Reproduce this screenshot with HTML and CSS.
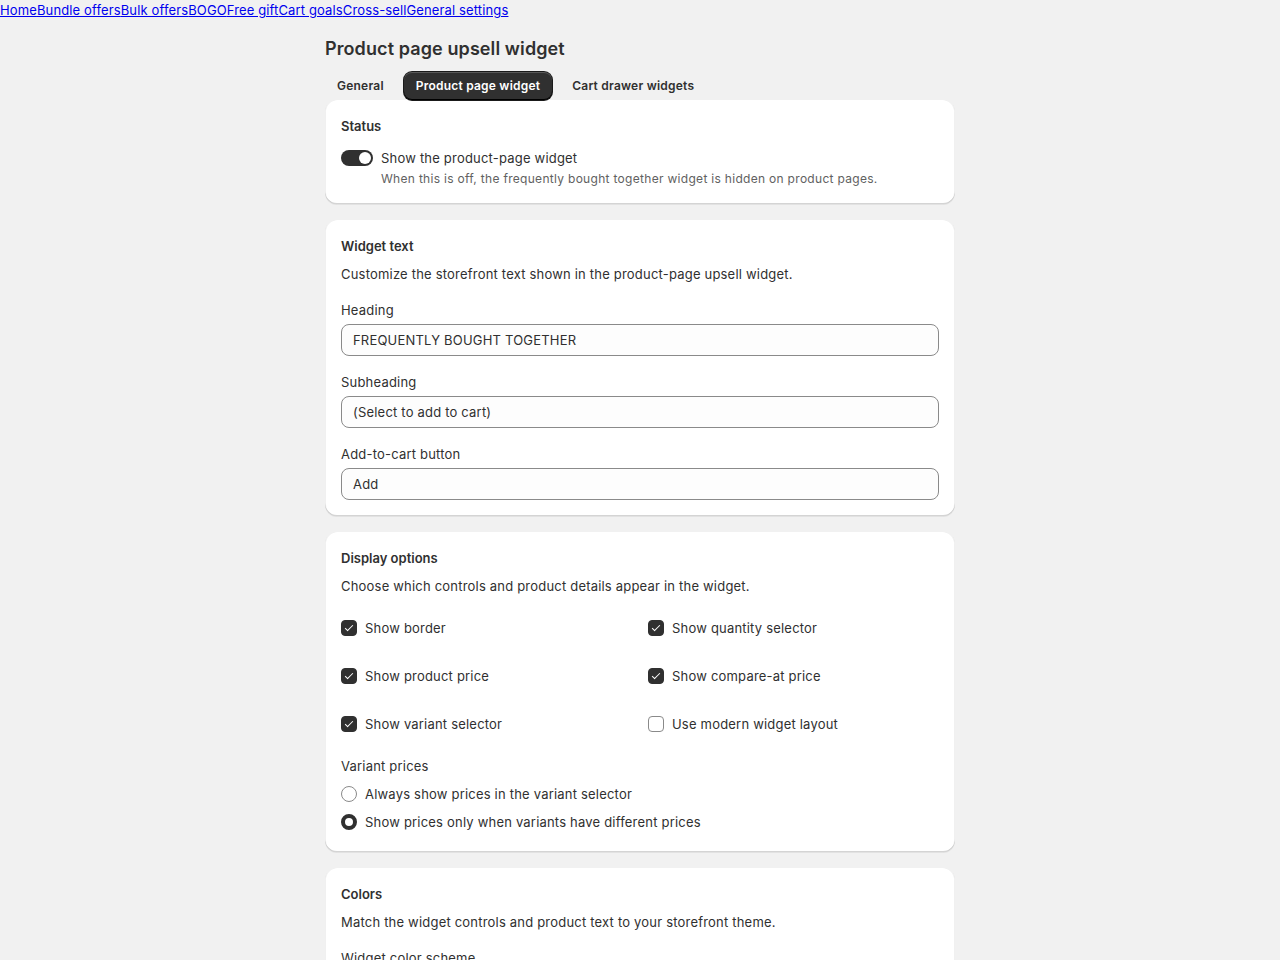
FILE: index.html
```html
<!DOCTYPE html>
<html lang="en">
<head>
    <meta charset="UTF-8">
    <meta name="viewport" content="width=device-width, initial-scale=1.0">
    <title>Product page upsell widget</title>
    <link rel="stylesheet" href="styles.css">
</head>
<body>
    <nav class="top-nav"><a href="#">Home</a><a href="#">Bundle offers</a><a href="#">Bulk offers</a><a href="#">BOGO</a><a href="#">Free gift</a><a href="#">Cart goals</a><a href="#">Cross-sell</a><a href="#">General settings</a></nav>

    <main class="page">
        <h1 class="page-title">Product page upsell widget</h1>

        <div class="tabs">
            <button class="tab">General</button>
            <button class="tab tab-active">Product page widget</button>
            <button class="tab">Cart drawer widgets</button>
        </div>

        <section class="card">
            <h2 class="card-title">Status</h2>
            <label class="toggle-row">
                <span class="toggle toggle-on"><span class="toggle-knob"></span></span>
                <span>Show the product-page widget</span>
            </label>
            <p class="help">When this is off, the frequently bought together widget is hidden on product pages.</p>
        </section>

        <section class="card">
            <h2 class="card-title">Widget text</h2>
            <p class="card-desc">Customize the storefront text shown in the product-page upsell widget.</p>
            <div class="field">
                <label class="field-label">Heading</label>
                <input class="text-input" type="text" value="FREQUENTLY BOUGHT TOGETHER">
            </div>
            <div class="field">
                <label class="field-label">Subheading</label>
                <input class="text-input" type="text" value="(Select to add to cart)">
            </div>
            <div class="field">
                <label class="field-label">Add-to-cart button</label>
                <input class="text-input" type="text" value="Add">
            </div>
        </section>

        <section class="card">
            <h2 class="card-title">Display options</h2>
            <p class="card-desc">Choose which controls and product details appear in the widget.</p>
            <div class="check-grid">
                <label class="check-row"><span class="checkbox checked"></span>Show border</label>
                <label class="check-row"><span class="checkbox checked"></span>Show quantity selector</label>
                <label class="check-row"><span class="checkbox checked"></span>Show product price</label>
                <label class="check-row"><span class="checkbox checked"></span>Show compare-at price</label>
                <label class="check-row"><span class="checkbox checked"></span>Show variant selector</label>
                <label class="check-row"><span class="checkbox"></span>Use modern widget layout</label>
            </div>
            <div class="radio-group">
                <div class="field-label">Variant prices</div>
                <label class="radio-row"><span class="radio"></span>Always show prices in the variant selector</label>
                <label class="radio-row"><span class="radio selected"></span>Show prices only when variants have different prices</label>
            </div>
        </section>

        <section class="card">
            <h2 class="card-title">Colors</h2>
            <p class="card-desc">Match the widget controls and product text to your storefront theme.</p>
            <div class="field">
                <label class="field-label">Widget color scheme</label>
                <input class="text-input" type="text" value="Match theme">
            </div>
        </section>
    </main>
</body>
</html>
```

FILE: styles.css
```css
body {
    margin: 0;
    background: #f1f1f1;
    font-family: Inter, 'Noto Sans', sans-serif;
    font-size: 13px;
    letter-spacing: 0.2px;
    color: #303030;
}
.top-nav {
    height: 20px;
    line-height: 20px;
    letter-spacing: 0.13px;
}
.top-nav a {
    color: #0000ee;
}
.page {
    width: 630px;
    margin: 0 auto;
    padding-top: 17px;
}
.page-title {
    margin: 0 0 11px;
    font-size: 18px;
    line-height: 24px;
    font-weight: 600;
    letter-spacing: 0.1px;
}
.tabs {
    display: flex;
    gap: 8px;
}
.tab {
    height: 28px;
    padding: 0 12px 2px;
    border: none;
    border-radius: 8px;
    background: transparent;
    font-family: inherit;
    font-size: 12px;
    font-weight: 600;
    letter-spacing: 0.22px;
    color: #303030;
}
.tab-active {
    background: #303030;
    color: #fff;
    box-shadow: inset 0 -1px 0 #000, inset 0 1px 0 rgba(255, 255, 255, 0.2), 0 0 0 1px #1a1a1a;
}
.card {
    background: #fff;
    border-radius: 12px;
    padding: 16px;
    margin-bottom: 16px;
    box-shadow: 0 1px 0 0 rgba(26, 26, 26, 0.07), inset 0 -1px 0 0 rgba(0, 0, 0, 0.17), inset 1px 0 0 rgba(0, 0, 0, 0.06), inset -1px 0 0 rgba(0, 0, 0, 0.06);
}
.card-title {
    margin: 0;
    font-size: 13px;
    line-height: 20px;
    font-weight: 600;
    letter-spacing: 0;
}
.card-desc {
    margin: 8px 0 0;
    line-height: 20px;
}
.toggle-row {
    display: flex;
    align-items: center;
    gap: 8px;
    margin-top: 12px;
    line-height: 20px;
}
.toggle {
    width: 32px;
    height: 16px;
    border-radius: 8px;
    background: #b5b5b5;
    display: flex;
    align-items: center;
    padding: 0 2px;
    box-sizing: border-box;
}
.toggle-on {
    background: #303030;
    justify-content: flex-end;
}
.toggle-knob {
    width: 12px;
    height: 12px;
    border-radius: 50%;
    background: #fff;
}
.help {
    margin: 0 0 0 40px;
    padding-top: 2px;
    font-size: 12px;
    line-height: 18px;
    letter-spacing: 0.3px;
    color: #616161;
}
.field {
    margin-top: 16px;
}
.field-label {
    display: block;
    line-height: 20px;
    margin-bottom: 4px;
}
.text-input {
    display: block;
    width: 100%;
    box-sizing: border-box;
    height: 32px;
    padding: 0 11px;
    border: 1px solid #8a8a8a;
    border-radius: 8px;
    background: #fdfdfd;
    font-family: inherit;
    font-size: 13px;
    letter-spacing: 0.2px;
    color: #303030;
}
.check-grid {
    display: grid;
    grid-template-columns: 1fr 1fr;
    column-gap: 16px;
    row-gap: 28px;
    margin-top: 22px;
}
.check-row, .radio-row {
    display: flex;
    align-items: center;
    gap: 8px;
    line-height: 20px;
}
.checkbox {
    width: 16px;
    height: 16px;
    box-sizing: border-box;
    border: 1px solid #8a8a8a;
    border-radius: 4px;
    background: #fff;
    position: relative;
}
.checkbox.checked {
    background: #303030;
    border-color: #303030;
}
.checkbox.checked::after {
    content: "";
    position: absolute;
    left: 5px;
    top: 2px;
    width: 3px;
    height: 7px;
    border: solid #fff;
    border-width: 0 1.5px 1.5px 0;
    transform: rotate(45deg);
}
.radio-group {
    margin-top: 22px;
}
.radio-row {
    height: 28px;
}
.radio {
    width: 16px;
    height: 16px;
    box-sizing: border-box;
    border: 1px solid #8a8a8a;
    border-radius: 50%;
    background: #fff;
}
.radio.selected {
    border: 4px solid #303030;
}
```
